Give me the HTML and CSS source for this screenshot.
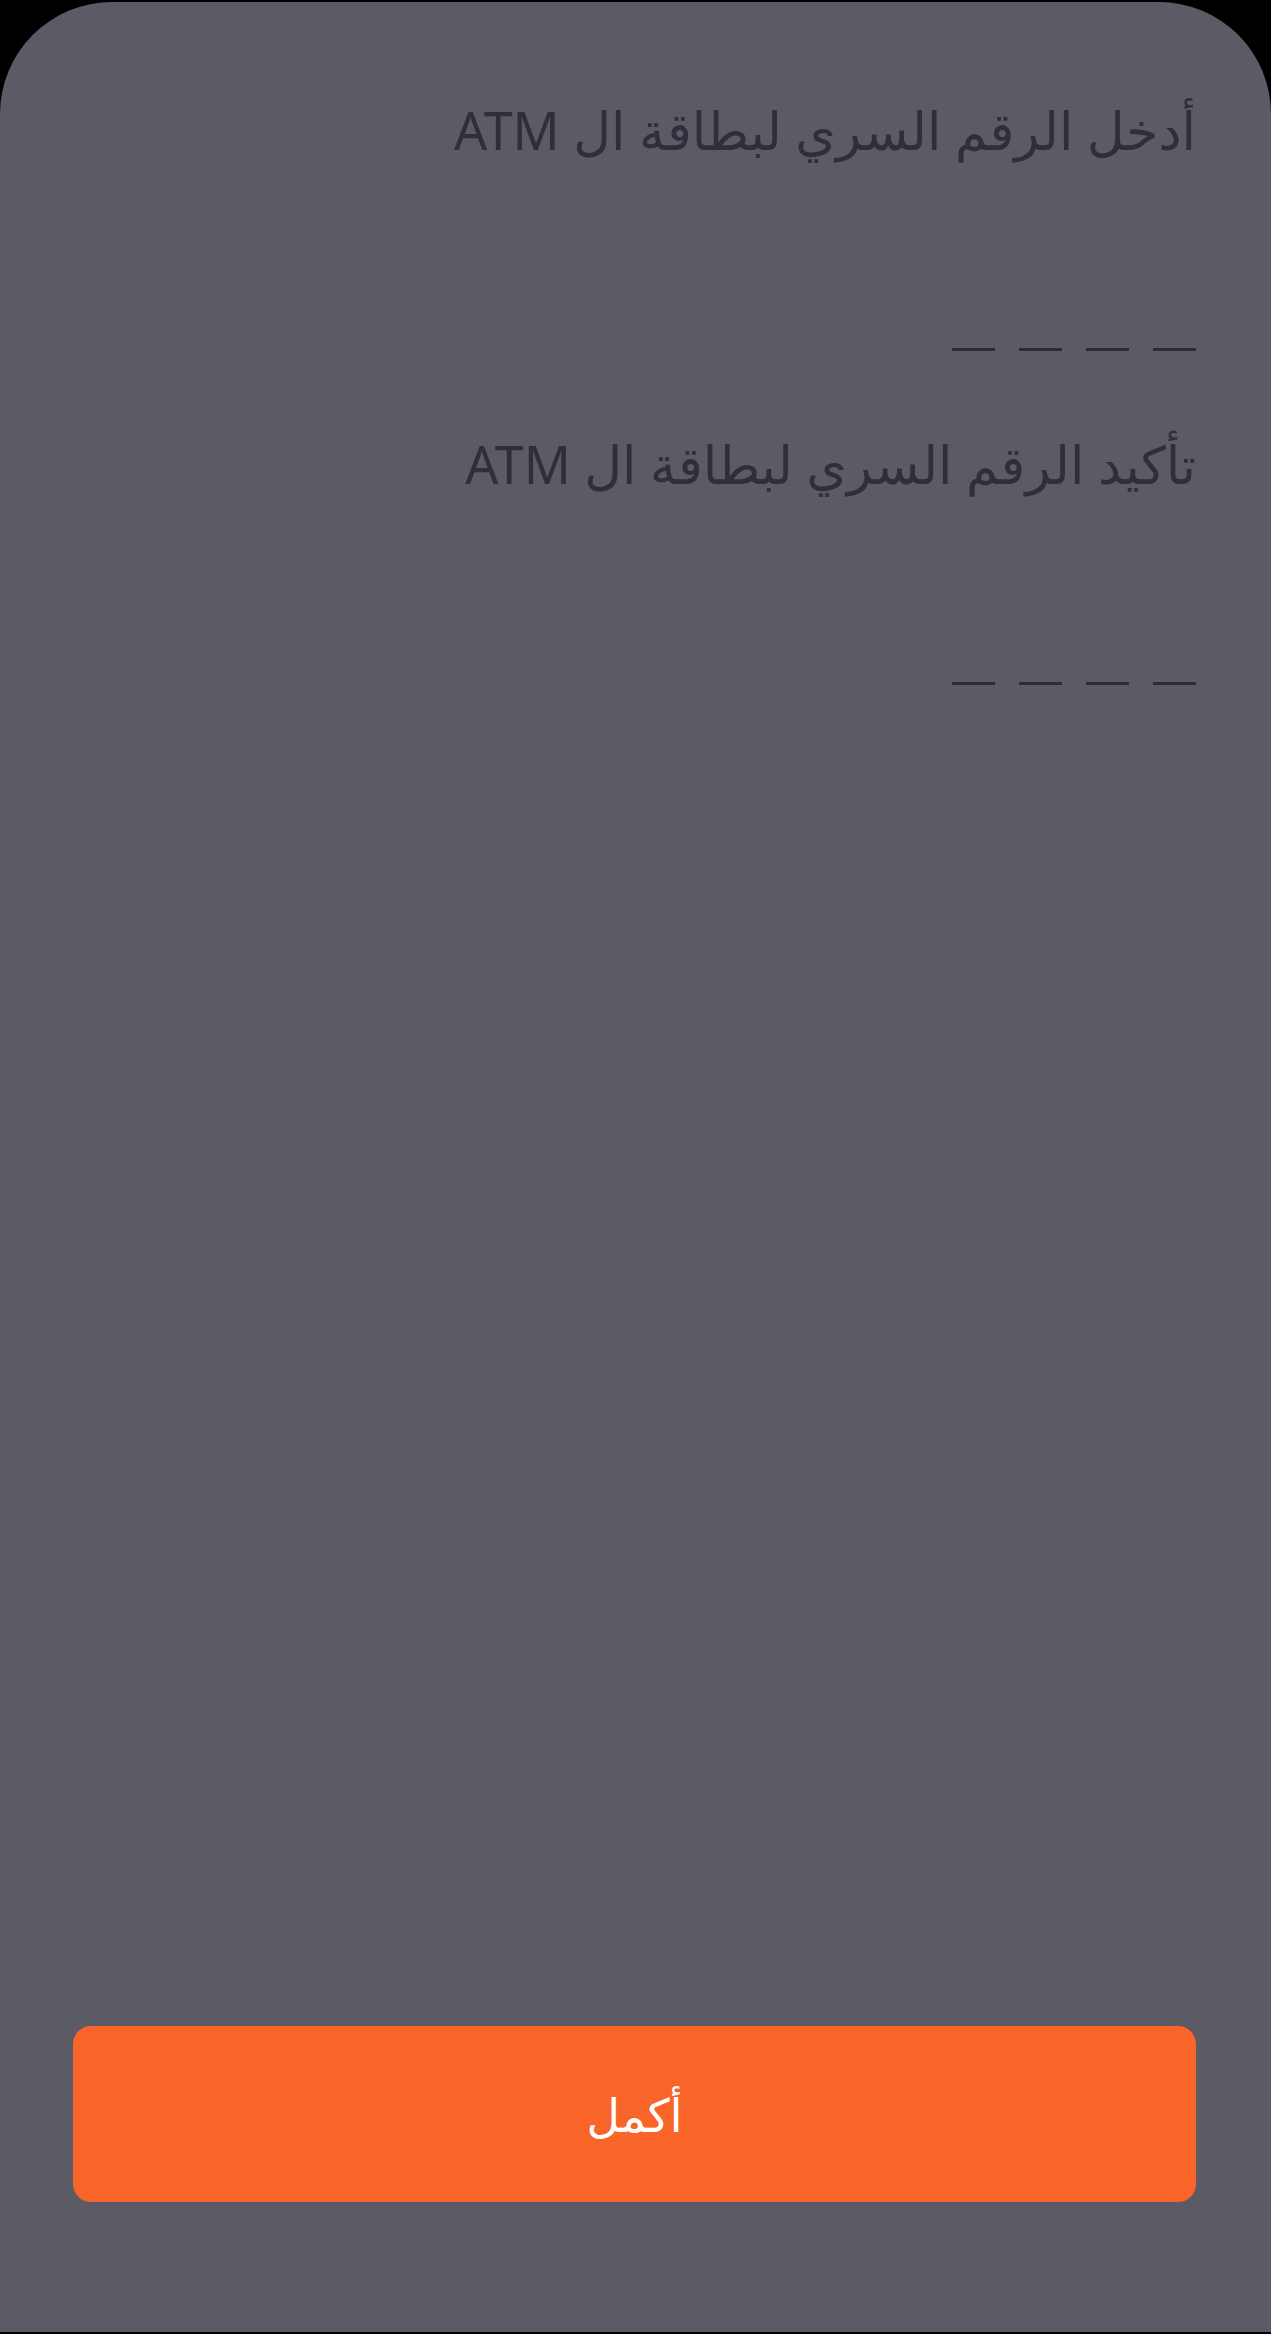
FILE: index.html
```html
<!DOCTYPE html>
<html lang="ar" dir="rtl">
<head>
<meta charset="utf-8">
<link rel="stylesheet" href="styles.css">
</head>
<body>
<div class="screen">
  <div class="field">
    <div class="label">أدخل الرقم السري لبطاقة ال ATM</div>
    <div class="pin"><span></span><span></span><span></span><span></span></div>
  </div>
  <div class="field">
    <div class="label">تأكيد الرقم السري لبطاقة ال ATM</div>
    <div class="pin"><span></span><span></span><span></span><span></span></div>
  </div>
  <button class="cta">أكمل</button>
</div>
</body>
</html>
```
FILE: styles.css
```css
html, body {
  margin: 0;
  padding: 0;
  background: #000;
}
body {
  width: 1271px;
  height: 2334px;
  overflow: hidden;
  font-family: "Noto Sans", "DejaVu Sans", sans-serif;
}
.screen {
  box-sizing: border-box;
  margin-top: 2px;
  height: 2330px;
  background: #5b5b66;
  border-radius: 112px 112px 0 0;
  padding: 88px 75px 130px 73px;
  display: flex;
  flex-direction: column;
}
.field {
  display: flex;
  flex-direction: column;
  margin-bottom: 73px;
}
.label {
  font-size: 52px;
  line-height: 80px;
  color: #2f2f3b;
}
.pin {
  display: flex;
  gap: 24px;
  margin-top: 178px;
}
.pin span {
  width: 43px;
  height: 3px;
  background: #2c2c38;
}
.cta {
  margin-top: auto;
  height: 176px;
  border: none;
  border-radius: 18px;
  background: #f96429;
  color: #fff;
  font-family: "Noto Sans", "DejaVu Sans", sans-serif;
  font-size: 46px;
}
```
